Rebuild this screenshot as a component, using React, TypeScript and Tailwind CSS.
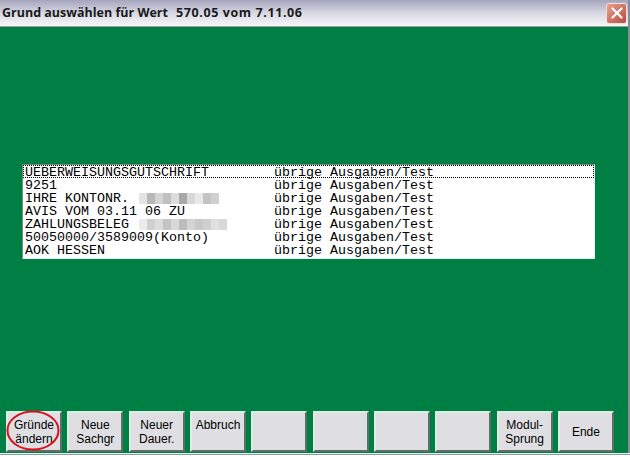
import { X } from "lucide-react";

const rows = [
  { name: "UEBERWEISUNGSGUTSCHRIFT", blur: [] as string[] },
  { name: "9251", blur: [] as string[] },
  {
    name: "IHRE KONTONR.",
    blur: ["bg-[#e4e4e4]", "bg-[#b8b8b8]", "bg-[#d4d4d4]", "bg-[#c0c0c0]", "bg-[#dcdcdc]", "bg-[#a8a8a8]", "bg-[#d8d8d8]", "bg-[#e8e8e8]", "bg-[#c4c4c4]", "bg-[#d0d0d0]"],
  },
  { name: "AVIS VOM 03.11 06 ZU", blur: [] as string[] },
  {
    name: "ZAHLUNGSBELEG",
    blur: ["bg-[#ececec]", "bg-[#d0d0d0]", "bg-[#dcdcdc]", "bg-[#c4c4c4]", "bg-[#d8d8d8]", "bg-[#bcbcbc]", "bg-[#d4d4d4]", "bg-[#c8c8c8]", "bg-[#d0d0d0]", "bg-[#e0e0e0]", "bg-[#d8d8d8]"],
  },
  { name: "50050000/3589009(Konto)", blur: [] as string[] },
  { name: "AOK HESSEN", blur: [] as string[] },
];

const buttons = [
  ["Gründe", "ändern"],
  ["Neue", "Sachgr"],
  ["Neuer", "Dauer."],
  ["Abbruch", "\u00a0"],
  [],
  [],
  [],
  [],
  ["Modul-", "Sprung"],
  ["Ende"],
];

function FnButton({ lines, circled }: { lines: string[]; circled?: boolean }) {
  return (
    <button className="relative flex h-[41px] w-[56px] shrink-0 flex-col items-center justify-center border-2 border-t-[#d8f0e4] border-l-[#d8f0e4] border-r-[#5f6f68] border-b-[#5f6f68] bg-[#dfdfe3] text-[12px] leading-[14px] text-black font-['Liberation_Sans',sans-serif]">
      {lines.map((line) => (
        <span key={line}>{line}</span>
      ))}
      {circled && (
        <svg className="absolute -top-[2px] -left-[2px] h-[41px] w-[56px] overflow-visible" viewBox="0 0 56 41" fill="none">
          <ellipse cx="27" cy="19.5" rx="25.5" ry="19" stroke="#d8101c" strokeWidth="2" />
        </svg>
      )}
    </button>
  );
}

export default function App() {
  return (
    <div className="flex h-[457px] w-[630px] flex-col overflow-hidden bg-white">
      <div className="flex h-[453px] shrink-0 flex-col border-r-2 border-r-[#8a8a9a]">
        <div className="flex h-[27px] shrink-0 items-center justify-between border-b border-b-[#9a9aa8] bg-gradient-to-b from-[#a4a4bc] via-[#d8d8e4] to-[#f6f6f8] pr-[1px] pl-[2px]">
          <span className="whitespace-pre text-[12.5px] font-bold text-[#1a1a1a] font-['Open_Sans',sans-serif]">
            Grund auswählen für Wert
            <span className="ml-[8px] tracking-[0.6px]">570.05 vom 7.11.06</span>
          </span>
          <div className="flex h-[21px] w-[21px] items-center justify-center rounded-[3px] border border-[#f0e0dc] bg-gradient-to-br from-[#e8a08c] to-[#b84a44]">
            <X size={18} strokeWidth={3} className="text-white" />
          </div>
        </div>
        <div className="flex min-h-0 flex-1 flex-col bg-[#007f44] pt-[137px] pb-[1px] pl-[6px]">
          <div className="ml-[16px] h-[95px] w-[573px] border border-t-[#6f8f7f] border-l-[#6f8f7f] border-r-[#e4f4ec] border-b-[#e4f4ec] bg-white font-['Liberation_Mono',monospace] text-[13.33px] leading-[13px] text-black">
            {rows.map((row, i) => (
              <div key={row.name} className={`flex h-[13px] items-center whitespace-pre pt-[2px] pl-[2px] ${i === 0 ? "outline outline-1 -outline-offset-1 outline-dotted outline-black" : ""}`}>
                <span className="flex w-[249px] items-center">
                  <span>{row.name}</span>
                  {row.blur.length > 0 && (
                    <span className="ml-[10px] flex h-[11px]">
                      {row.blur.map((color, j) => (
                        <span key={j} className={`h-full w-[8px] ${color}`} />
                      ))}
                    </span>
                  )}
                </span>
                <span>übrige Ausgaben/Test</span>
              </div>
            ))}
          </div>
          <div className="mt-auto flex gap-[5.33px]">
            {buttons.map((lines, i) => (
              <FnButton key={i} lines={lines} circled={i === 0} />
            ))}
          </div>
        </div>
      </div>
      <div className="h-[2px] shrink-0 border-b border-b-[#8a9aa4] bg-[#eef2f4]" />
      <div className="h-[2px] shrink-0 overflow-hidden bg-white pl-[3px] text-[11px] leading-[11px] font-bold whitespace-pre text-black font-['Liberation_Sans',sans-serif]">
        <span className="block pt-[1px]">ZAHLUNGSEINGANG MIT HILFE</span>
      </div>
    </div>
  );
}
